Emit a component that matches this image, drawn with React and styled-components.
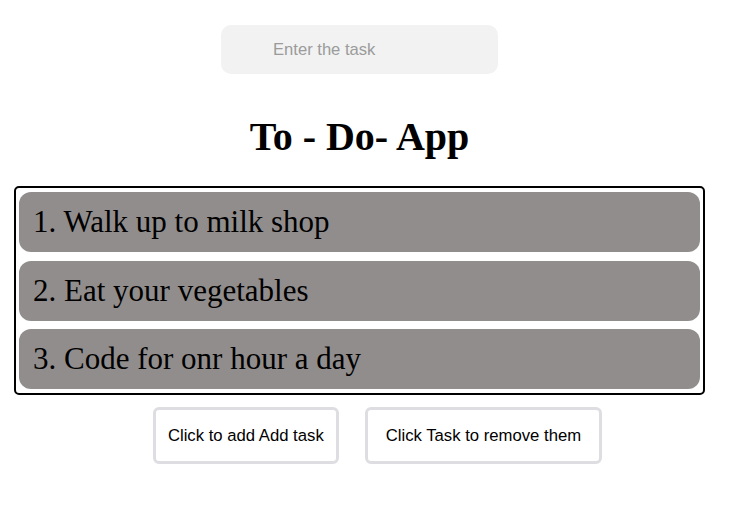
import React from "react";
import styled, { createGlobalStyle } from "styled-components";

const Global = createGlobalStyle`
  html, body { margin: 0; padding: 0; background: #ffffff; }
  body { font-family: "Liberation Serif", "Times New Roman", serif; }
`;

const Page = styled.div`
  width: 719px;
  display: flex;
  flex-direction: column;
  align-items: center;
  padding-top: 25px;
`;

const TaskInput = styled.input`
  box-sizing: border-box;
  width: 277px;
  height: 49px;
  border: none;
  outline: none;
  border-radius: 10px;
  background: #f2f2f2;
  padding: 0 0 0 52px;
  font-family: "Liberation Sans", Arial, sans-serif;
  font-size: 16.6px;
  color: #333;
  &::placeholder { color: #9b9b9b; }
`;

const Title = styled.h1`
  margin: 40px 0 0;
  font-family: "Liberation Serif", "Times New Roman", serif;
  font-weight: bold;
  font-size: 40px;
  line-height: 46px;
  color: #000;
`;

const List = styled.ol`
  box-sizing: border-box;
  align-self: stretch;
  margin: 26px 14px 0;
  padding: 4px 3px;
  list-style: none;
  border: 2px solid #000;
  border-radius: 5px;
  display: flex;
  flex-direction: column;
  gap: 8.5px;
`;

const Item = styled.li`
  height: 60px;
  display: flex;
  align-items: center;
  padding-left: 14px;
  border-radius: 12px;
  background: #918d8c;
  font-family: "Liberation Serif", "Times New Roman", serif;
  font-size: 31px;
  color: #000;
`;

const ButtonRow = styled.div`
  display: flex;
  gap: 26px;
  margin-top: 12px;
  padding-left: 36px;
`;

const Button = styled.button`
  box-sizing: border-box;
  height: 57px;
  padding: 0 ${(p) => p.$pad}px;
  background: #fff;
  border: 3px solid #dedee2;
  border-radius: 6px;
  font-family: "Liberation Sans", Arial, sans-serif;
  font-size: 16.7px;
  color: #000;
  cursor: pointer;
`;

const tasks = ["Walk up to milk shop", "Eat your vegetables", "Code for onr hour a day"];

export default function App() {
  return (
    <>
      <Global />
      <Page>
        <TaskInput placeholder="Enter the task" />
        <Title>To - Do- App</Title>
        <List>
          {tasks.map((t, i) => (
            <Item key={t}>{`${i + 1}. ${t}`}</Item>
          ))}
        </List>
        <ButtonRow>
          <Button $pad={12}>Click to add Add task</Button>
          <Button $pad={18}>Click Task to remove them</Button>
        </ButtonRow>
      </Page>
    </>
  );
}
